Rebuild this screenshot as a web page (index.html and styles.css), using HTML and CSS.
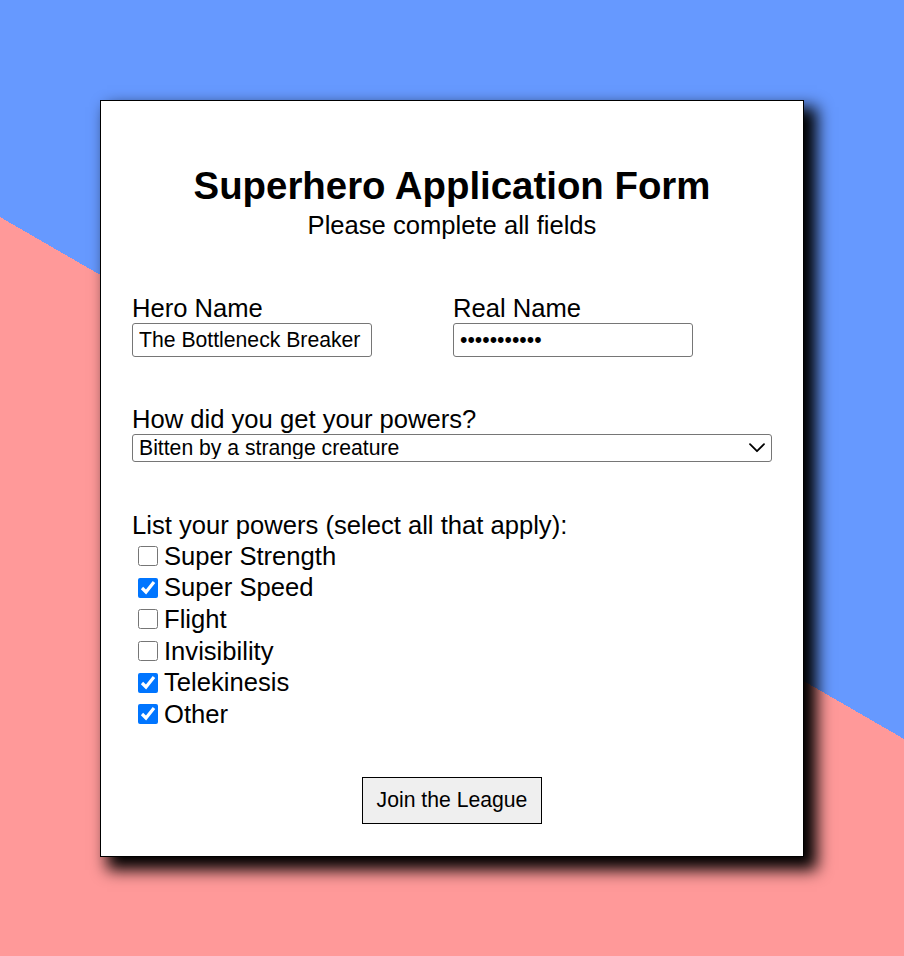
FILE: index.html
```html
<!DOCTYPE html>
<html lang="en">
<head>
<meta charset="utf-8">
<title>Superhero Application Form</title>
<link rel="stylesheet" href="styles.css">
</head>
<body>
<form class="card">
  <header class="header">
    <h1 class="title">Superhero Application Form</h1>
    <p class="subtitle">Please complete all fields</p>
  </header>

  <div class="names">
    <div class="field">
      <label class="label" for="hero">Hero Name</label>
      <input class="text-input" id="hero" type="text" value="The Bottleneck Breaker">
    </div>
    <div class="field">
      <label class="label" for="real">Real Name</label>
      <input class="text-input" id="real" type="password" value="abcdefghijk">
    </div>
  </div>

  <div class="section section-origin">
    <label class="label" for="origin">How did you get your powers?</label>
    <div class="select-wrap">
      <select class="select" id="origin">
        <option>Bitten by a strange creature</option>
        <option>Radioactive exposure</option>
        <option>Science experiment</option>
        <option>Born with them</option>
      </select>
      <svg class="chevron" width="16" height="10" viewBox="0 0 16 10" aria-hidden="true">
        <path d="M1 1.2 L8 8.2 L15 1.2" fill="none" stroke="#000" stroke-width="1.8" stroke-linecap="round" stroke-linejoin="round"/>
      </svg>
    </div>
  </div>

  <div class="section section-powers">
    <p class="label list-label">List your powers (select all that apply):</p>
    <label class="check-row"><input class="check" type="checkbox">Super Strength</label>
    <label class="check-row"><input class="check" type="checkbox" checked>Super Speed</label>
    <label class="check-row"><input class="check" type="checkbox">Flight</label>
    <label class="check-row"><input class="check" type="checkbox">Invisibility</label>
    <label class="check-row"><input class="check" type="checkbox" checked>Telekinesis</label>
    <label class="check-row"><input class="check" type="checkbox" checked>Other</label>
  </div>

  <div class="actions">
    <button class="submit" type="button">Join the League</button>
  </div>
</form>
</body>
</html>
```

FILE: styles.css
```css
html {
  height: 100%;
  background: linear-gradient(210deg, #6699ff 50%, #ff9999 50%);
}

body {
  margin: 0;
  padding: 100px 100px 60px;
  font-family: "Liberation Sans", Arial, Helvetica, sans-serif;
  color: #000;
}

.card {
  display: flex;
  flex-direction: column;
  background: #fff;
  border: 1px solid #000;
  padding: 32px 31px;
  box-shadow: 10px 10px 15px 3px #000;
}

.header {
  margin-top: 31px;
  text-align: center;
}

.title {
  margin: 0 0 3px;
  font-size: 38.4px;
  font-weight: bold;
  line-height: normal;
}

.subtitle {
  margin: 0;
  font-size: 25.6px;
  line-height: normal;
}

.names {
  margin-top: 53.5px;
  display: grid;
  grid-template-columns: 1fr 1fr;
  column-gap: 2px;
}

.field {
  display: flex;
  flex-direction: column;
  align-items: flex-start;
}

.label {
  display: block;
  margin: 0;
  font-size: 25.6px;
  line-height: normal;
}

.text-input {
  box-sizing: border-box;
  width: 240px;
  height: 34px;
  margin: 0;
  padding: 0 6px;
  font-family: inherit;
  font-size: 21.2px;
  color: #000;
  background: #fff;
  border: 1px solid #767676;
  border-radius: 3px;
}

.section {
  display: flex;
  flex-direction: column;
}

.section-origin {
  margin-top: 48px;
}

.section-powers {
  margin-top: 49px;
}

.list-label {
  margin-bottom: 1px;
}

.select-wrap {
  position: relative;
}

.select {
  box-sizing: border-box;
  width: 100%;
  height: 28px;
  margin: 0;
  padding: 0 30px 0 6px;
  font-family: inherit;
  font-size: 21.2px;
  color: #000;
  background: #fff;
  border: 1px solid #767676;
  border-radius: 3px;
  appearance: none;
  -webkit-appearance: none;
}

.chevron {
  position: absolute;
  right: 7px;
  top: 9px;
  pointer-events: none;
}

.check-row {
  display: flex;
  align-items: center;
  height: 31.6px;
  font-size: 25.6px;
}

.check {
  width: 20px;
  height: 20px;
  margin: 0 6px 0 6px;
  flex: none;
}

.actions {
  margin-top: 46.5px;
  display: flex;
  justify-content: center;
}

.submit {
  box-sizing: border-box;
  width: 180px;
  height: 47px;
  margin: 0;
  padding: 0;
  font-family: inherit;
  font-size: 21.2px;
  color: #000;
  background: #efefef;
  border: 1px solid #000;
  border-radius: 0;
}
```
